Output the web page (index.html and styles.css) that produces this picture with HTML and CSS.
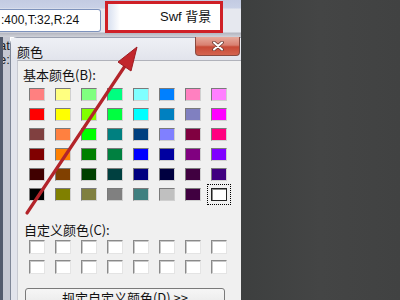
FILE: index.html
```html
<!DOCTYPE html>
<html>
<head>
<meta charset="utf-8">
<link rel="stylesheet" href="styles.css">
</head>
<body>
<div class="screen">
  <div class="topbar">
    <div class="field">:400,T:32,R:24</div>
    <div class="hl"><div class="btn">Swf 背景</div></div>
  </div>
  <div class="main">
    <div class="strip"><div>at</div><div>e:\</div></div>
    <div class="dialog">
      <div class="titlebar">
        <span class="title">颜色</span>
        <div class="close"><svg width="12" height="10" viewBox="0 0 12 10"><path d="M2 1.5 L10 8.5 M10 1.5 L2 8.5" stroke="#6a3a32" stroke-width="3.6" stroke-linecap="round"/><path d="M2 1.5 L10 8.5 M10 1.5 L2 8.5" stroke="#fff" stroke-width="2" stroke-linecap="round"/></svg></div>
      </div>
      <div class="panel">
        <div class="label l1">基本颜色(B):</div>
        <div class="grid basic">
          <i style="background:#ff8080"></i><i style="background:#ffff80"></i><i style="background:#80ff80"></i><i style="background:#00ff80"></i><i style="background:#80ffff"></i><i style="background:#0080ff"></i><i style="background:#ff80c0"></i><i style="background:#ff80ff"></i>
          <i style="background:#ff0000"></i><i style="background:#ffff00"></i><i style="background:#80ff00"></i><i style="background:#00ff40"></i><i style="background:#00ffff"></i><i style="background:#0080c0"></i><i style="background:#8080c0"></i><i style="background:#ff00ff"></i>
          <i style="background:#804040"></i><i style="background:#ff8040"></i><i style="background:#00ff00"></i><i style="background:#008080"></i><i style="background:#004080"></i><i style="background:#8080ff"></i><i style="background:#800040"></i><i style="background:#ff0080"></i>
          <i style="background:#800000"></i><i style="background:#ff8000"></i><i style="background:#008000"></i><i style="background:#008040"></i><i style="background:#0000ff"></i><i style="background:#0000a0"></i><i style="background:#800080"></i><i style="background:#8000ff"></i>
          <i style="background:#400000"></i><i style="background:#804000"></i><i style="background:#004000"></i><i style="background:#004040"></i><i style="background:#000080"></i><i style="background:#000040"></i><i style="background:#400040"></i><i style="background:#400080"></i>
          <i style="background:#000000"></i><i style="background:#808000"></i><i style="background:#808040"></i><i style="background:#808080"></i><i style="background:#408080"></i><i style="background:#c0c0c0"></i><i style="background:#400040"></i><i class="sel" style="background:#ffffff"></i>
        </div>
        <div class="label l2">自定义颜色(C):</div>
        <div class="grid custom">
          <i></i><i></i><i></i><i></i><i></i><i></i><i></i><i></i>
          <i></i><i></i><i></i><i></i><i></i><i></i><i></i><i></i>
        </div>
        <div class="define">规定自定义颜色(D) &gt;&gt;</div>
      </div>
    </div>
  </div>
</div>
<div class="dark"></div>
<svg class="arrow" width="400" height="300" viewBox="0 0 400 300">
  <line x1="27" y1="213" x2="127" y2="63" stroke="#b3242a" stroke-width="3.2" stroke-linecap="round"/>
  <polygon points="137,47 131,71 118,62" fill="#c2262c" stroke="#9e1c22" stroke-width="1"/>
</svg>
</body>
</html>
```
FILE: styles.css
```css
html, body {
  margin: 0;
  padding: 0;
}
body {
  width: 400px;
  height: 300px;
  overflow: hidden;
  display: flex;
  position: relative;
  font-family: "Liberation Sans", "Noto Sans CJK SC", sans-serif;
  font-size: 13px;
  color: #111;
}
.screen {
  width: 241px;
  height: 300px;
  display: flex;
  flex-direction: column;
  overflow: hidden;
}
.dark {
  flex: 1;
  background: linear-gradient(90deg, #3d3f3f, #444545 50%, #414242);
}
.topbar {
  height: 37px;
  display: flex;
  align-items: flex-start;
  background: linear-gradient(180deg, #c3cbe2 0, #c9d1e6 8px, #e6e8ef 9px, #e6e8ef 32px, #b4b6c0 33px, #cfd1d8 37px);
}
.field {
  width: 99px;
  height: 21px;
  margin-top: 9px;
  background: #fff;
  border: 1px solid #7d92bc;
  border-left: none;
  border-radius: 0 3px 3px 0;
  font-size: 12px;
  line-height: 21px;
  padding-left: 1px;
  white-space: nowrap;
  overflow: hidden;
}
.hl {
  margin-left: 4px;
  margin-top: 1px;
  width: 112px;
  height: 26px;
  border: 3px solid #cf2027;
}
.btn {
  height: 26px;
  background: linear-gradient(90deg, #d8e0f0 0, #ffffff 12px);
  text-align: left;
  line-height: 26px;
  padding-left: 52px;
  font-size: 13px;
  white-space: nowrap;
}
.main {
  flex: 1;
  display: flex;
  min-height: 0;
}
.strip {
  width: 7px;
  padding-top: 2px;
  background: #c6c8d2;
  border-left: 3px solid #525a6c;
  font-size: 13px;
  line-height: 14px;
  overflow: hidden;
  text-indent: -4px;
  white-space: nowrap;
  color: #222;
}
.dialog {
  flex: 1;
  display: flex;
  flex-direction: column;
  background: #e2e4ec;
  border-left: 1px solid #7f8798;
  border-top: 1px solid #9aa0b0;
  border-top-left-radius: 7px;
  min-width: 0;
}
.titlebar {
  height: 25px;
  display: flex;
  align-items: flex-start;
  background: linear-gradient(180deg, #eef0f5, #e2e4ec);
}
.title {
  font-family: "Noto Sans CJK SC", sans-serif;
  font-size: 13px;
  line-height: 16px;
  padding-top: 6px;
  padding-left: 6px;
}
.close {
  margin-left: auto;
  margin-right: 1px;
  margin-top: -1px;
  width: 45px;
  height: 19px;
  border: 1px solid #8a4a40;
  border-top: none;
  border-radius: 0 0 4px 4px;
  background: linear-gradient(180deg, #e6aa9c 0, #d98070 45%, #c84a36 55%, #d46450 100%);
  display: flex;
  align-items: center;
  justify-content: center;
  box-sizing: border-box;
}
.panel {
  flex: 1;
  margin-left: 6px;
  background: #f0f0f0;
  border-top: 1px solid #b0b2ba;
  border-left: 1px solid #c8cad2;
  display: flex;
  flex-direction: column;
}
.label {
  font-family: "Noto Sans CJK SC", sans-serif;
  font-size: 13px;
  line-height: 15px;
  white-space: nowrap;
}
.l1 {
  padding-top: 6px;
  padding-left: 5px;
}
.l2 {
  margin-top: 21px;
  padding-left: 6px;
}
.grid {
  display: grid;
  grid-template-columns: repeat(8, 16px);
  column-gap: 10px;
  padding-left: 11px;
}
.basic {
  margin-top: 6px;
  grid-auto-rows: 13px;
  row-gap: 7px;
}
.custom {
  margin-top: 3px;
  grid-auto-rows: 14px;
  row-gap: 6px;
}
.grid i {
  display: block;
  box-sizing: border-box;
  border: 1px solid;
  border-color: #7a7a7a #d0d0d0 #d0d0d0 #7a7a7a;
}
.custom i {
  background: #fff;
  border-color: #8a8a8a #e4e4e4 #e4e4e4 #8a8a8a;
  box-shadow: inset 1px 1px 0 #c8c8c8;
}
.basic i.sel {
  border: 1px solid #222;
  box-shadow: inset 1px 1px 0 #8a8a8a;
  outline: 1px dotted #000;
  outline-offset: 3px;
}
.define {
  margin-top: 14px;
  margin-left: 7px;
  width: 200px;
  height: 26px;
  box-sizing: border-box;
  border: 1px solid #7a7a7a;
  border-radius: 3px;
  background: linear-gradient(180deg, #f6f6f6, #e4e4e4);
  text-align: center;
  font-family: "Noto Sans CJK SC", sans-serif;
  font-size: 13px;
  line-height: 18px;
  white-space: nowrap;
}
.arrow {
  position: absolute;
  left: 0;
  top: 0;
  pointer-events: none;
}
```
